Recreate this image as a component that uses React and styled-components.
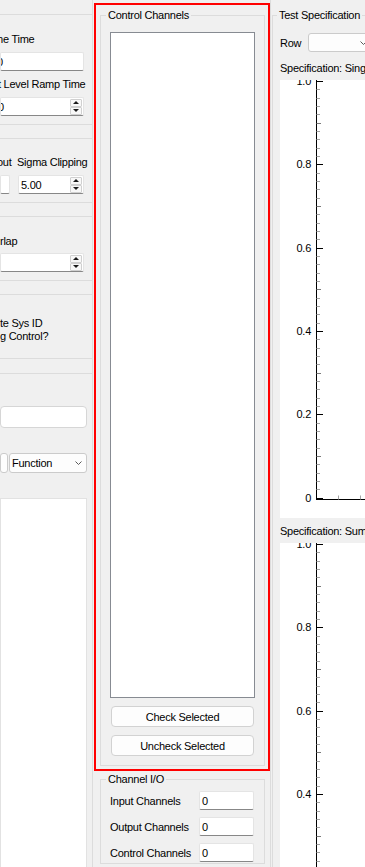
import React from "react";
import styled, { createGlobalStyle } from "styled-components";

const GlobalStyle = createGlobalStyle`
  html, body { margin: 0; padding: 0; }
  body {
    background: #f0f0f0;
    color: #000;
    font-family: "Liberation Sans", Arial, sans-serif;
    font-size: 11px;
    letter-spacing: -0.25px;
    overflow: hidden;
  }
  *, *::before, *::after { box-sizing: border-box; }
`;

const Window = styled.div`
  display: flex;
  width: 365px;
  height: 867px;
  overflow: hidden;
  background: #f0f0f0;
`;

/* ---------- left settings column (only its right edge is visible) ---------- */

const LeftColumn = styled.div`
  flex: none;
  width: 93px;
  padding-top: 14px;
  border-right: 1px solid #dcdcdc;
  overflow: hidden;
  display: flex;
  flex-direction: column;
`;

const Group = styled.div`
  display: flex;
  flex-direction: column;
  gap: ${(p) => p.$spacing ?? 6}px;
  margin-top: ${(p) => p.$gap ?? 0}px;
  padding: ${(p) => p.$top}px ${(p) => p.$right ?? 8}px ${(p) => p.$bottom ?? 0}px 0;
  border-top: 1px solid #dcdcdc;
  border-bottom: ${(p) => (p.$open ? "none" : "1px solid #dcdcdc")};
  flex: ${(p) => (p.$open ? 1 : "none")};
  min-height: 0;
`;

const Label = styled.div`
  line-height: ${(p) => p.$lh ?? 14}px;
  white-space: pre;
  text-indent: ${(p) => p.$indent ?? 0}px;
`;

const Field = styled.div`
  display: flex;
  align-items: center;
  height: ${(p) => p.$h ?? 19}px;
  padding: 0 1px 0 2px;
  background: #fff;
  border: 1px solid #e4e4e4;
  border-bottom-color: #878787;
  border-radius: 2px;
  overflow: hidden;
`;

const FieldText = styled.span`
  flex: 1;
  white-space: pre;
  text-indent: ${(p) => p.$indent ?? 0}px;
`;

const SpinButtons = styled.div`
  flex: none;
  display: flex;
  flex-direction: column;
`;

const SpinButton = styled.div`
  width: 12px;
  height: 8px;
  display: flex;
  align-items: center;
  justify-content: center;
  background: #f8f8f8;
  border: 1px solid #d0d0d0;
  border-radius: 1px;
`;

const Arrow = styled.span`
  width: 0;
  height: 0;
  border-left: 3px solid transparent;
  border-right: 3px solid transparent;
  ${(p) =>
    p.$up ? "border-bottom: 3px solid #1a1a1a;" : "border-top: 3px solid #1a1a1a;"}
`;

const SpinBox = ({ value, indent }) => (
  <Field>
    <FieldText $indent={indent}>{value}</FieldText>
    <SpinButtons>
      <SpinButton>
        <Arrow $up />
      </SpinButton>
      <SpinButton>
        <Arrow />
      </SpinButton>
    </SpinButtons>
  </Field>
);

const PairGrid = styled.div`
  display: grid;
  grid-template-columns: 10px 66px;
  column-gap: 8px;
  row-gap: 6px;
`;

const TextInput = styled.div`
  height: 22px;
  background: #fff;
  border: 1px solid #d6d6d6;
  border-radius: 4px;
`;

const ComboRow = styled.div`
  display: grid;
  grid-template-columns: 3px 1fr;
  column-gap: 6px;
`;

const Combo = styled.div`
  display: flex;
  align-items: center;
  justify-content: space-between;
  height: ${(p) => p.$h ?? 20}px;
  width: ${(p) => (p.$w ? `${p.$w}px` : "auto")};
  padding: 0 4px 0 2px;
  background: #fdfdfd;
  border: 1px solid #cbcbcb;
  border-radius: 3px;
  white-space: nowrap;
`;

const Chevron = () => (
  <svg width="7" height="4" viewBox="0 0 7 4">
    <path d="M0.5 0.5 L3.5 3.5 L6.5 0.5" fill="none" stroke="#5a5a5a" strokeWidth="1" />
  </svg>
);

const WhiteArea = styled.div`
  flex: 1;
  background: #fff;
  border: 1px solid #e2e2e2;
  border-bottom: none;
`;

/* ---------- middle column ---------- */

const MiddleColumn = styled.div`
  flex: none;
  width: 178px;
  padding: 3px 0 0 1px;
  border-right: 1px solid #dcdcdc;
  display: flex;
  flex-direction: column;
`;

const Highlight = styled.div`
  flex: none;
  height: 768px;
  padding: 3px 3px 3px 4px;
  border: 2px solid #ff0000;
  display: flex;
  flex-direction: column;
`;

const GroupBox = styled.fieldset`
  margin: ${(p) => p.$margin ?? "0"};
  min-width: 0;
  width: ${(p) => (p.$w ? `${p.$w}px` : "auto")};
  padding: ${(p) => p.$top}px ${(p) => p.$side}px ${(p) => p.$bottom}px
    ${(p) => p.$left ?? p.$side}px;
  border: 1px solid #dcdcdc;
  display: flex;
  flex-direction: column;
  flex: none;
`;

const Title = styled.legend`
  padding: 0 2px;
  margin-left: ${(p) => p.$shift}px;
  line-height: 14px;
`;

const ChannelList = styled.div`
  flex: none;
  height: 666px;
  background: #fff;
  border: 1px solid #878b92;
`;

const Button = styled.div`
  flex: none;
  height: 21px;
  margin: 8px 1px 0;
  display: flex;
  align-items: center;
  justify-content: center;
  background: #fdfdfd;
  border: 1px solid #d2d2d2;
  border-radius: 4px;
`;

const IOGrid = styled.div`
  display: grid;
  grid-template-columns: 89px 55px;
  grid-auto-rows: 19px;
  row-gap: 7px;
  align-items: center;
`;

/* ---------- right column ---------- */

const RightColumn = styled.div`
  flex: 1;
  min-width: 0;
  overflow: hidden;
  padding: 8px 0 0 1px;
`;

const RowLine = styled.div`
  display: flex;
  align-items: center;
`;

const RowLabel = styled.span`
  width: 28px;
  line-height: 14px;
`;

const SpecLabel = styled.div`
  margin-top: ${(p) => p.$gap}px;
  line-height: 14px;
  white-space: nowrap;
`;

const ChartArea = styled.div`
  margin-top: 5px;
  height: ${(p) => p.$h}px;
  background: #fff;
  overflow: hidden;
`;

const STEP = 83.3;
const AXIS_X = 36.5;

function AxisChart({ height, labels, showXAxis }) {
  const top = 1;
  const parts = [];
  const last = showXAxis ? (labels.length - 1) * 10 : Math.ceil(height / (STEP / 10));
  for (let k = 0; k <= last; k++) {
    const y = Math.round(top + (k * STEP) / 10) + 0.5;
    const major = k % 10 === 0;
    const mid = k % 5 === 0;
    const len = major ? 6.5 : mid ? 4.5 : 3.5;
    const color = major ? "#000" : mid ? "#7a7a7a" : "#a3a3a3";
    parts.push(
      <line key={`t${k}`} x1={AXIS_X} x2={AXIS_X + len} y1={y} y2={y} stroke={color} strokeWidth="1" />
    );
  }
  labels.forEach((label, i) => {
    parts.push(
      <text
        key={`l${i}`}
        x="31"
        y={top + i * STEP + 4}
        textAnchor="end"
        fontSize="11"
        fill="#000"
      >
        {label}
      </text>
    );
  });
  const baseY = Math.round(top + (labels.length - 1) * STEP) + 1.5;
  return (
    <svg width="420" height={height}>
      <line x1={AXIS_X} x2={AXIS_X} y1="0" y2={showXAxis ? baseY + 0.5 : height} stroke="#000" strokeWidth="1" />
      {showXAxis && (
        <>
          <line x1={AXIS_X - 0.5} x2="420" y1={baseY} y2={baseY} stroke="#000" strokeWidth="1" />
          {[58.5, 80.5, 102.5].map((x) => (
            <line key={x} x1={x} x2={x} y1={baseY - 4} y2={baseY} stroke="#a3a3a3" strokeWidth="1" />
          ))}
        </>
      )}
      {parts}
    </svg>
  );
}

export default function App() {
  return (
    <>
      <GlobalStyle />
      <Window>
        <LeftColumn>
          <Group $top={17} $bottom={8}>
            <Label $indent={-6}>me Time</Label>
            <Field>
              <FieldText $indent={-6}>0</FieldText>
            </Field>
            <Label $indent={-2}>t Level Ramp Time</Label>
            <SpinBox value="0" indent={-5} />
          </Group>

          <Group $gap={13} $top={16} $bottom={8}>
            <PairGrid>
              <Label $indent={-3}>out</Label>
              <Label $indent={-1}>Sigma Clipping</Label>
              <Field />
              <SpinBox value="5.00" />
            </PairGrid>
          </Group>

          <Group $gap={13} $top={17} $bottom={8} $spacing={5}>
            <Label>rlap</Label>
            <SpinBox value="" />
          </Group>

          <Group $gap={13} $top={22} $bottom={15}>
            <Label $lh={13}>
              te Sys ID
              <br />g Control?
            </Label>
          </Group>

          <Group $gap={14} $top={32} $right={5} $spacing={25} $open>
            <TextInput />
            <ComboRow>
              <Combo />
              <Combo>
                Function
                <Chevron />
              </Combo>
            </ComboRow>
            <WhiteArea />
          </Group>
        </LeftColumn>

        <MiddleColumn>
          <Highlight>
            <GroupBox $top={10} $side={9} $bottom={9}>
              <Title $shift={-4}>Control Channels</Title>
              <ChannelList />
              <Button>Check Selected</Button>
              <Button>Uncheck Selected</Button>
            </GroupBox>
          </Highlight>

          <GroupBox $margin="1px 5px 0 6px" $top={5} $side={9} $bottom={1}>
            <Title $shift={-4}>Channel I/O</Title>
            <IOGrid>
              <span>Input Channels</span>
              <Field>
                <FieldText>0</FieldText>
              </Field>
              <span>Output Channels</span>
              <Field>
                <FieldText>0</FieldText>
              </Field>
              <span>Control Channels</span>
              <Field>
                <FieldText>0</FieldText>
              </Field>
            </IOGrid>
          </GroupBox>
        </MiddleColumn>

        <RightColumn>
          <GroupBox $w={440} $top={11} $side={0} $left={7} $bottom={0}>
            <Title $shift={-3}>Test Specification</Title>
            <RowLine>
              <RowLabel>Row</RowLabel>
              <Combo $w={64} $h={19}>
                <span />
                <Chevron />
              </Combo>
            </RowLine>
            <SpecLabel $gap={9}>Specification: Single Row</SpecLabel>
            <ChartArea $h={438}>
              <AxisChart height={438} labels={["1.0", "0.8", "0.6", "0.4", "0.2", "0"]} showXAxis />
            </ChartArea>
            <SpecLabel $gap={6}>Specification: Sum of Rows</SpecLabel>
            <ChartArea $h={400}>
              <AxisChart height={400} labels={["1.0", "0.8", "0.6", "0.4", "0.2"]} />
            </ChartArea>
          </GroupBox>
        </RightColumn>
      </Window>
    </>
  );
}
